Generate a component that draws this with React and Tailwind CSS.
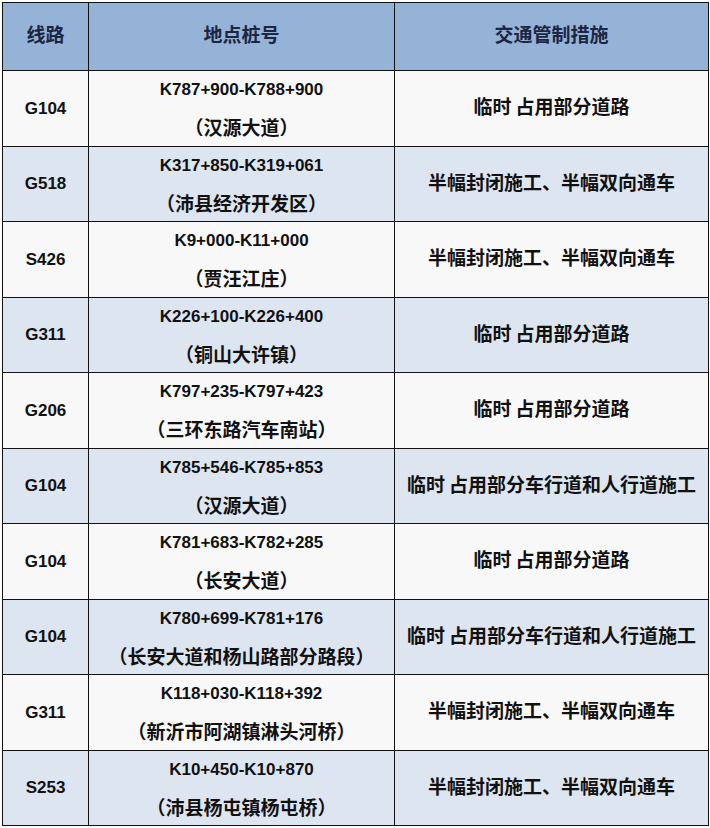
import React from 'react';

const rows = [
  { road: 'G104', pile: 'K787+900-K788+900', place: '（汉源大道）', measure: ['临时', '占用部分道路'] },
  { road: 'G518', pile: 'K317+850-K319+061', place: '（沛县经济开发区）', measure: ['半幅封闭施工、半幅双向通车'] },
  { road: 'S426', pile: 'K9+000-K11+000', place: '（贾汪江庄）', measure: ['半幅封闭施工、半幅双向通车'] },
  { road: 'G311', pile: 'K226+100-K226+400', place: '（铜山大许镇）', measure: ['临时', '占用部分道路'] },
  { road: 'G206', pile: 'K797+235-K797+423', place: '（三环东路汽车南站）', measure: ['临时', '占用部分道路'] },
  { road: 'G104', pile: 'K785+546-K785+853', place: '（汉源大道）', measure: ['临时', '占用部分车行道和人行道施工'] },
  { road: 'G104', pile: 'K781+683-K782+285', place: '（长安大道）', measure: ['临时', '占用部分道路'] },
  { road: 'G104', pile: 'K780+699-K781+176', place: '（长安大道和杨山路部分路段）', measure: ['临时', '占用部分车行道和人行道施工'] },
  { road: 'G311', pile: 'K118+030-K118+392', place: '（新沂市阿湖镇淋头河桥）', measure: ['半幅封闭施工、半幅双向通车'] },
  { road: 'S253', pile: 'K10+450-K10+870', place: '（沛县杨屯镇杨屯桥）', measure: ['半幅封闭施工、半幅双向通车'] },
];

const font = { fontFamily: '"Liberation Sans", "Noto Sans CJK SC", sans-serif' };

const App = () => {
  return (
    <div className="w-[710px] h-[828px] bg-white pt-[2px] pl-[2px]" style={font}>
      <div className="w-[707px] grid grid-cols-[86px_306px_314px] border-l border-t border-[#111]">
        {/* header */}
        <div className="h-[68px] bg-[#95b2d7] border-r border-b border-[#111] flex items-center justify-center text-[19px] font-bold text-[#1c2541]">
          线路
        </div>
        <div className="h-[68px] bg-[#95b2d7] border-r border-b border-[#111] flex items-center justify-center text-[19px] font-bold text-[#1c2541]">
          地点桩号
        </div>
        <div className="h-[68px] bg-[#95b2d7] border-r border-b border-[#111] flex items-center justify-center text-[19px] font-bold text-[#1c2541]">
          交通管制措施
        </div>

        {rows.map((row, idx) => {
          const bg = idx % 2 === 0 ? 'bg-[#f8f8f9]' : 'bg-[#dde5f0]';
          return (
            <React.Fragment key={idx}>
              <div className={`h-[75.5px] ${bg} border-r border-b border-[#111] flex items-center justify-center text-[17px] font-bold text-[#111]`}>
                {row.road}
              </div>
              <div className={`h-[75.5px] ${bg} border-r border-b border-[#111] flex flex-col items-center justify-center font-bold text-[#111]`}>
                <div className="text-[17px] leading-[39px] pt-[2px]">{row.pile}</div>
                <div className="text-[19px] leading-[39px]">{row.place}</div>
              </div>
              <div className={`h-[75.5px] ${bg} border-r border-b border-[#111] flex items-center justify-center text-[19px] font-bold text-[#111]`}>
                {row.measure.map((part, i) => (
                  <span key={i} className={i > 0 ? 'ml-[4px]' : ''}>{part}</span>
                ))}
              </div>
            </React.Fragment>
          );
        })}
      </div>
    </div>
  );
};

export default App;
